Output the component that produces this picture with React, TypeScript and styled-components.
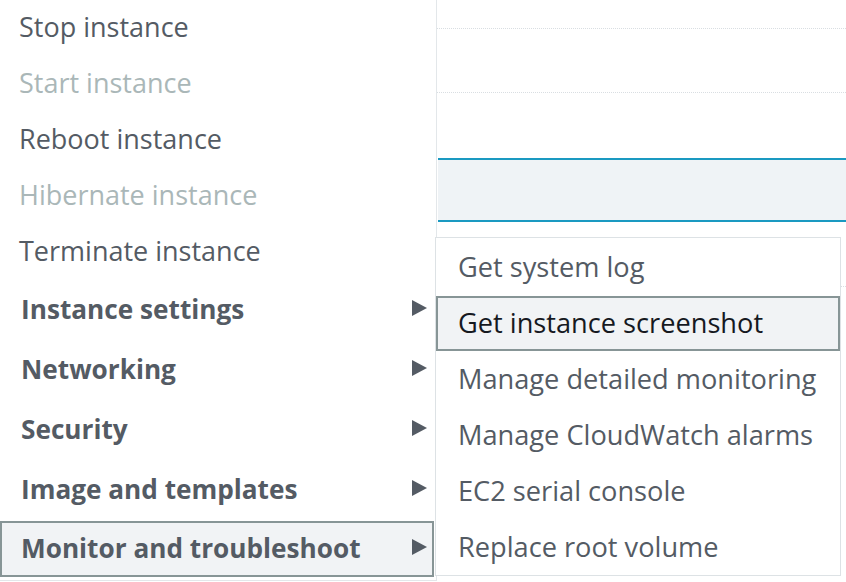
import React from "react";
import styled, { createGlobalStyle, css } from "styled-components";

const GlobalStyle = createGlobalStyle`
  html, body { margin: 0; padding: 0; background: #ffffff; }
  body { overflow: hidden; font-family: "Open Sans", "Noto Sans", Arial, sans-serif; }
  * { box-sizing: border-box; }
`;

const Screen = styled.div`
  position: relative;
  width: 846px;
  height: 582px;
  overflow: hidden;
  display: flex;
  background: #ffffff;
`;

const ActionMenu = styled.div`
  width: 437px;
  flex: none;
  display: flex;
  flex-direction: column;
  border-right: 1px solid #e3e7ea;
  border-bottom: 1px solid #e3e7ea;
  height: 581px;
`;

type Variant = "normal" | "disabled" | "group";

const MenuItem = styled.div<{ $variant: Variant; $active?: boolean }>`
  display: flex;
  align-items: center;
  justify-content: space-between;
  flex: none;
  height: 56px;
  padding: 0 9px 3px 19px;
  font-size: 27px;
  font-weight: 400;
  color: #545b64;
  white-space: nowrap;
  ${(p) =>
    p.$variant === "disabled" &&
    css`
      color: #aab7b8;
    `}
  ${(p) =>
    p.$variant === "group" &&
    css`
      height: 60px;
      padding-left: 21px;
      font-size: 26.2px;
      font-weight: 700;
    `}
  ${(p) =>
    p.$active &&
    css`
      height: 56px;
      margin: 1px 2px 3px 0;
      padding-left: 19px;
      padding-right: 5px;
      border: 2px solid #879596;
      background: #f1f3f5;
    `}
`;

const Arrow = styled.svg`
  width: 15px;
  height: 16px;
  flex: none;
  margin-top: -2px;
  fill: #545b64;
`;

const TablePane = styled.div`
  flex: 1;
  display: flex;
  flex-direction: column;
`;

const TableRow = styled.div<{ $h: number; $selected?: boolean; $line?: boolean }>`
  flex: none;
  height: ${(p) => p.$h}px;
  border-bottom: ${(p) => (p.$line ? "1px dotted #d9dee2" : "none")};
  ${(p) =>
    p.$selected &&
    css`
      margin-left: 1px;
      border-top: 2px solid #1a99c1;
      border-bottom: 2px solid #1a99c1;
      background: #eff3f6;
    `}
`;

const SubMenu = styled.div`
  position: absolute;
  left: 435px;
  top: 237px;
  width: 406px;
  height: 339px;
  padding-top: 2px;
  background: #ffffff;
  border: 1px solid #dde2e5;
  display: flex;
  flex-direction: column;
`;

const SubItem = styled.div<{ $active?: boolean }>`
  flex: none;
  height: 56px;
  display: flex;
  align-items: center;
  padding: 0 0 3px 22px;
  font-size: 27.2px;
  color: #545b64;
  white-space: nowrap;
  ${(p) =>
    p.$active &&
    css`
      height: 55px;
      margin-bottom: 1px;
      padding-left: 20px;
      border: 2px solid #879596;
      background: #f1f3f5;
      color: #16191f;
    `}
`;

const TriangleIcon = () => (
  <Arrow viewBox="0 0 15 16">
    <polygon points="0,0 15,8 0,16" />
  </Arrow>
);

const actions: { label: string; variant: Variant }[] = [
  { label: "Stop instance", variant: "normal" },
  { label: "Start instance", variant: "disabled" },
  { label: "Reboot instance", variant: "normal" },
  { label: "Hibernate instance", variant: "disabled" },
  { label: "Terminate instance", variant: "normal" },
];

const groups = [
  "Instance settings",
  "Networking",
  "Security",
  "Image and templates",
  "Monitor and troubleshoot",
];

const subItems = [
  "Get system log",
  "Get instance screenshot",
  "Manage detailed monitoring",
  "Manage CloudWatch alarms",
  "EC2 serial console",
  "Replace root volume",
];

export default function App() {
  return (
    <>
      <GlobalStyle />
      <Screen>
        <ActionMenu>
          {actions.map((a) => (
            <MenuItem key={a.label} $variant={a.variant}>
              {a.label}
            </MenuItem>
          ))}
          {groups.map((g, i) => (
            <MenuItem key={g} $variant="group" $active={i === groups.length - 1}>
              <span>{g}</span>
              <TriangleIcon />
            </MenuItem>
          ))}
        </ActionMenu>
        <TablePane>
          <TableRow $h={29} $line />
          <TableRow $h={64} $line />
          <TableRow $h={65} />
          <TableRow $h={64} $selected />
          <TableRow $h={65} $line />
        </TablePane>
        <SubMenu>
          {subItems.map((s, i) => (
            <SubItem key={s} $active={i === 1}>
              {s}
            </SubItem>
          ))}
        </SubMenu>
      </Screen>
    </>
  );
}
